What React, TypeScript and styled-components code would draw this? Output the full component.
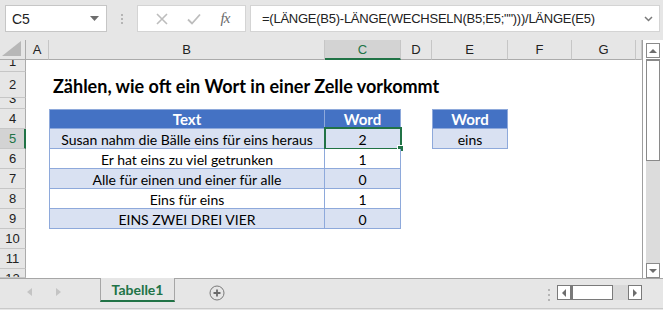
import React from 'react';
import styled, { createGlobalStyle, css } from 'styled-components';

const GREEN = '#217346';
const COLS = [26, 23, 276, 76, 31, 76, 64, 64, 6];
const ROWS = [20, 12, 26, 11, 20, 20, 20, 20, 20, 20, 20, 20, 9];
const LETTERS = ['A', 'B', 'C', 'D', 'E', 'F', 'G', ''];

const data = [
  ['Susan nahm die Bälle eins für eins heraus', '2'],
  ['Er hat eins zu viel getrunken', '1'],
  ['Alle für einen und einer für alle', '0'],
  ['Eins für eins', '1'],
  ['EINS ZWEI DREI VIER', '0'],
];

const GlobalStyle = createGlobalStyle`
  html, body {
    margin: 0;
    padding: 0;
  }
  body {
    font-family: "Liberation Sans", Arial, sans-serif;
    background: #fff;
  }
`;

export default function App(): JSX.Element {
  return (
    <Window>
      <GlobalStyle />
      <FormulaBar>
        <NameBox>
          <span>C5</span>
          <svg width="9" height="5" viewBox="0 0 9 5">
            <path d="M0 0h9L4.5 5z" fill="#6d6d6d" />
          </svg>
        </NameBox>
        <Grip>
          <i />
          <i />
          <i />
        </Grip>
        <FxButtons>
          <svg width="12" height="12" viewBox="0 0 12 12">
            <path d="M1 1l10 10M11 1L1 11" stroke="#bdbdbd" strokeWidth="1.6" />
          </svg>
          <svg width="14" height="12" viewBox="0 0 14 12">
            <path d="M1 6.5l4 4L13 1.5" stroke="#bdbdbd" strokeWidth="1.8" fill="none" />
          </svg>
          <FxLabel>fx</FxLabel>
        </FxButtons>
        <FormulaInput>
          <span>=(LÄNGE(B5)-LÄNGE(WECHSELN(B5;E5;"")))/LÄNGE(E5)</span>
          <svg width="9" height="6" viewBox="0 0 9 6">
            <path d="M1 1l3.5 3.5L8 1" stroke="#7a7a7a" strokeWidth="1.5" fill="none" />
          </svg>
        </FormulaInput>
      </FormulaBar>

      <Main>
        <Sheet>
          <Corner>
            <svg width="20" height="15" viewBox="0 0 20 15">
              <path d="M19 0v15H0z" fill="#b7b7b7" />
            </svg>
          </Corner>
          {LETTERS.map((l, i) => (
            <ColHeader key={i} $col={i + 2} $active={l === 'C'}>
              {l}
            </ColHeader>
          ))}
          {ROWS.slice(1).map((_, i) => (
            <RowHeader
              key={i}
              $row={i + 2}
              $active={i + 1 === 5}
              $align={i + 1 === 1 || i + 1 === 3 ? 'flex-end' : i + 1 === 12 ? 'flex-start' : 'center'}
            >
              {i + 1}
            </RowHeader>
          ))}

          <Title>Zählen, wie oft ein Wort in einer Zelle vorkommt</Title>

          <Cell $col={3} $row={5} $head $left $top>
            Text
          </Cell>
          <Cell $col={4} $row={5} $head $top>
            Word
          </Cell>
          {data.map(([text, count], i) => (
            <React.Fragment key={i}>
              <Cell $col={3} $row={6 + i} $band={i % 2 === 0} $left>
                {text}
              </Cell>
              <Cell $col={4} $row={6 + i} $band={i % 2 === 0}>
                {count}
                {i === 0 && (
                  <Selection>
                    <FillHandle />
                  </Selection>
                )}
              </Cell>
            </React.Fragment>
          ))}

          <Cell $col={6} $row={5} $head $left $top>
            Word
          </Cell>
          <Cell $col={6} $row={6} $band $left>
            eins
          </Cell>
        </Sheet>

        <VScroll>
          <ScrollButton>
            <svg width="8" height="4" viewBox="0 0 8 4">
              <path d="M0 4h8L4 0z" fill="#6d6d6d" />
            </svg>
          </ScrollButton>
          <VThumb />
          <VTrack />
          <ScrollButton>
            <svg width="8" height="4" viewBox="0 0 8 4">
              <path d="M0 0h8L4 4z" fill="#6d6d6d" />
            </svg>
          </ScrollButton>
        </VScroll>
      </Main>

      <TabBar>
        <TabNav>
          <svg width="5" height="8" viewBox="0 0 5 8">
            <path d="M5 0v8L0 4z" fill="#c4c4c4" />
          </svg>
          <svg width="5" height="8" viewBox="0 0 5 8">
            <path d="M0 0v8l5-4z" fill="#c4c4c4" />
          </svg>
        </TabNav>
        <SheetTab>Tabelle1</SheetTab>
        <AddSheet>
          <svg width="16" height="16" viewBox="0 0 16 16">
            <circle cx="8" cy="8" r="7" fill="none" stroke="#7a7a7a" strokeWidth="1" />
            <path d="M8 4.5v7M4.5 8h7" stroke="#6a6a6a" strokeWidth="1.8" />
          </svg>
        </AddSheet>
        <Grip $h>
          <i />
          <i />
          <i />
        </Grip>
        <HScroll>
          <HButton>
            <svg width="4" height="8" viewBox="0 0 4 8">
              <path d="M4 0v8L0 4z" fill="#6d6d6d" />
            </svg>
          </HButton>
          <HThumb />
          <HTrack />
          <HButton>
            <svg width="4" height="8" viewBox="0 0 4 8">
              <path d="M0 0v8l4-4z" fill="#6d6d6d" />
            </svg>
          </HButton>
        </HScroll>
      </TabBar>
    </Window>
  );
}

const Window = styled.div`
  width: 663px;
  height: 310px;
  background: #e6e6e6;
  display: flex;
  flex-direction: column;
  overflow: hidden;
`;

const FormulaBar = styled.div`
  height: 42px;
  box-sizing: border-box;
  padding: 5px 3px 0 5px;
  display: flex;
  align-items: flex-start;
`;

const NameBox = styled.div`
  width: 102px;
  height: 27px;
  box-sizing: border-box;
  background: #fff;
  border: 1px solid #c6c6c6;
  display: flex;
  align-items: center;
  justify-content: space-between;
  padding: 0 7px 0 6px;
  font-size: 14px;
  color: #222;
`;

const Grip = styled.div<{ $h?: boolean }>`
  width: 30px;
  height: ${p => (p.$h ? '29px' : '27px')};
  display: flex;
  flex-direction: column;
  align-items: center;
  justify-content: center;
  gap: 2px;

  i {
    width: 2px;
    height: 2px;
    background: #b5b5b5;
  }

  ${p =>
    p.$h &&
    css`
      width: 17px;
      margin-left: auto;
      gap: 3px;
      padding-top: 2px;
      box-sizing: border-box;
    `}
`;

const FxButtons = styled.div`
  width: 109px;
  height: 27px;
  box-sizing: border-box;
  background: #fff;
  border: 1px solid #d4d4d4;
  display: flex;
  align-items: center;
  justify-content: space-around;
  padding: 0 6px 0 8px;
`;

const FxLabel = styled.span`
  font-family: "Liberation Serif", "Times New Roman", serif;
  font-style: italic;
  font-size: 15px;
  color: #6a6a6a;
  letter-spacing: -1px;
`;

const FormulaInput = styled.div`
  margin-left: 4px;
  flex: 1;
  height: 27px;
  box-sizing: border-box;
  background: #fff;
  border: 1px solid #d4d4d4;
  display: flex;
  align-items: center;
  justify-content: space-between;
  padding: 0 6px 0 11px;
  font-size: 13px;
  letter-spacing: -0.25px;
  color: #222;
`;

const Main = styled.div`
  height: 238px;
  display: flex;
  background: #fff;
`;

const Sheet = styled.div`
  display: grid;
  grid-template-columns: ${COLS.map(c => c + 'px').join(' ')};
  grid-template-rows: ${ROWS.map(r => r + 'px').join(' ')};
  background: #fff;
  border-right: 1px solid #9f9f9f;
  overflow: hidden;
`;

const Corner = styled.div`
  grid-column: 1;
  grid-row: 1;
  background: #e6e6e6;
  border-right: 1px solid #ababab;
  border-bottom: 1px solid #ababab;
  display: flex;
  align-items: flex-end;
  justify-content: flex-end;
  padding: 0 3px 3px 0;
`;

const ColHeader = styled.div<{ $col: number; $active?: boolean }>`
  grid-column: ${p => p.$col};
  grid-row: 1;
  background: ${p => (p.$active ? '#d3d3d3' : '#e6e6e6')};
  color: ${p => (p.$active ? GREEN : '#222')};
  border-right: 1px solid #c6c6c6;
  border-bottom: ${p => (p.$active ? `2px solid ${GREEN}` : '1px solid #ababab')};
  display: flex;
  align-items: center;
  justify-content: center;
  font-size: 13px;
  padding-top: ${p => (p.$active ? '1px' : '0')};
`;

const RowHeader = styled.div<{ $row: number; $active?: boolean; $align: string }>`
  grid-column: 1;
  grid-row: ${p => p.$row};
  background: ${p => (p.$active ? '#d3d3d3' : '#e6e6e6')};
  color: ${p => (p.$active ? GREEN : '#222')};
  border-right: ${p => (p.$active ? `2px solid ${GREEN}` : '1px solid #ababab')};
  border-bottom: 1px solid #c6c6c6;
  display: flex;
  align-items: ${p => p.$align};
  justify-content: center;
  overflow: hidden;
  font-size: 13px;
  line-height: 19px;
  padding-left: ${p => (p.$active ? '1px' : '0')};
`;

const Title = styled.div`
  grid-column: 3 / 9;
  grid-row: 3;
  display: flex;
  align-items: center;
  padding-left: 4px;
  padding-top: 2px;
  font-family: Lato, "Liberation Sans", sans-serif;
  font-weight: 700;
  font-size: 18px;
  color: #000;
  white-space: nowrap;
`;

const Cell = styled.div<{
  $col: number;
  $row: number;
  $head?: boolean;
  $band?: boolean;
  $left?: boolean;
  $top?: boolean;
}>`
  grid-column: ${p => p.$col};
  grid-row: ${p => p.$row};
  position: relative;
  display: flex;
  align-items: center;
  justify-content: center;
  padding-top: 2px;
  font-family: Lato, "Liberation Sans", sans-serif;
  font-size: 14px;
  white-space: nowrap;
  color: #000;
  background: ${p => (p.$head ? '#4472c4' : p.$band ? '#d9e1f2' : '#fff')};
  border-right: 1px solid #8ea9db;
  border-bottom: 1px solid #8ea9db;
  border-left: ${p => (p.$left ? '1px solid #8ea9db' : 'none')};
  border-top: ${p => (p.$top ? '1px solid #8ea9db' : 'none')};

  ${p =>
    p.$head &&
    css`
      color: #fff;
      font-weight: 700;
      font-size: 15px;
      padding-top: 0;
    `}
`;

const Selection = styled.div`
  position: absolute;
  top: -2px;
  left: -1px;
  right: -2px;
  bottom: -2px;
  border: 2px solid ${GREEN};
`;

const FillHandle = styled.div`
  position: absolute;
  right: -4px;
  bottom: -4px;
  width: 5px;
  height: 5px;
  background: ${GREEN};
  border: 1px solid #fff;
`;

const VScroll = styled.div`
  width: 14px;
  margin: 3px 3px 0 3px;
  display: flex;
  flex-direction: column;
`;

const ScrollButton = styled.div`
  height: 15px;
  box-sizing: border-box;
  background: #fff;
  border: 1px solid #8a8a8a;
  display: flex;
  align-items: center;
  justify-content: center;
`;

const VThumb = styled.div`
  height: 102px;
  box-sizing: border-box;
  background: #fff;
  border: 1px solid #8a8a8a;
  border-top-width: 2px;
  margin-top: 1px;
`;

const VTrack = styled.div`
  flex: 1;
  background: #dcdcdc;
`;

const TabBar = styled.div`
  flex: 1;
  display: flex;
  align-items: flex-start;
  border-top: 1px solid #a6a6a6;
  border-bottom: 1px solid #c9c9c9;
  margin-bottom: 1px;
  padding-right: 21px;
`;

const TabNav = styled.div`
  width: 100px;
  height: 26px;
  display: flex;
  align-items: center;
  gap: 24px;
  padding-left: 27px;
  box-sizing: border-box;
`;

const SheetTab = styled.div`
  width: 75px;
  height: 24px;
  box-sizing: border-box;
  margin-top: -1px;
  border-left: 1px solid #a6a6a6;
  border-right: 1px solid #a6a6a6;
  border-bottom: 2px solid ${GREEN};
  background: #e6e6e6;
  display: flex;
  align-items: center;
  justify-content: center;
  font-family: Lato, "Liberation Sans", sans-serif;
  font-weight: 700;
  font-size: 14px;
  color: ${GREEN};
`;

const AddSheet = styled.div`
  width: 84px;
  height: 28px;
  display: flex;
  align-items: center;
  justify-content: center;
`;

const HScroll = styled.div`
  display: flex;
  height: 15px;
  margin-top: 6px;
`;

const HButton = styled.div`
  width: 14px;
  box-sizing: border-box;
  background: #fff;
  border: 1px solid #7a7a7a;
  display: flex;
  align-items: center;
  justify-content: center;
`;

const HThumb = styled.div`
  width: 42px;
  box-sizing: border-box;
  background: #fff;
  border: 1px solid #7a7a7a;
  border-left-width: 2px;
`;

const HTrack = styled.div`
  width: 15px;
  background: #d9d9d9;
`;
